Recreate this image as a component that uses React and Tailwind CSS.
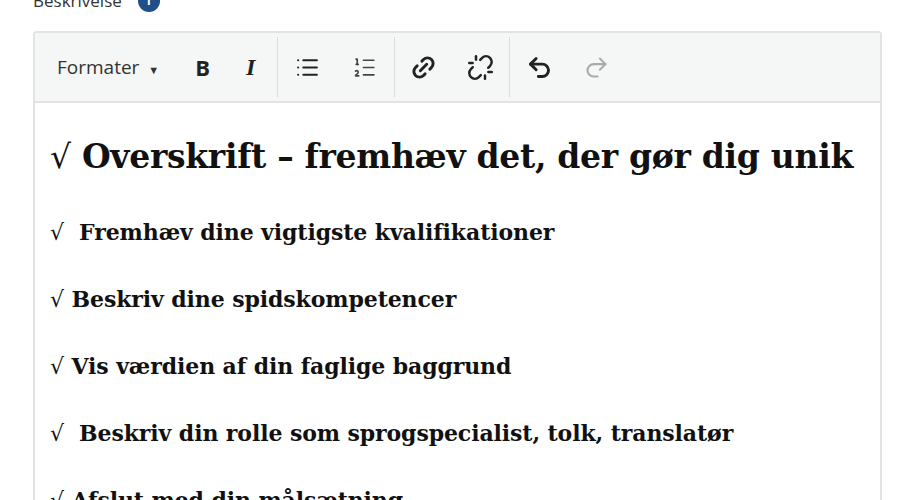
import React from 'react';
import { List, ListOrdered, Link2, Unlink, Undo2, Redo2 } from 'lucide-react';

const lines = [
    ' Fremhæv dine vigtigste kvalifikationer',
    'Beskriv dine spidskompetencer',
    'Vis værdien af din faglige baggrund',
    ' Beskriv din rolle som sprogspecialist, tolk, translatør',
    'Afslut med din målsætning',
];

const Sep = () => <div className="w-px self-stretch bg-[#dcdcdc]" />;

export default function App() {
    return (
        <div className="w-[900px] h-[500px] overflow-hidden bg-white relative" style={{ fontFamily: '"Open Sans", sans-serif' }}>
            <div className="absolute left-[33px] -top-[12px] flex items-center gap-4 text-[17px] text-[#333]">
                Beskrivelse
                <span className="w-[22px] h-[22px] rounded-full bg-[#1f4f8a] text-white text-[12px] font-bold flex items-center justify-center">i</span>
            </div>
            <div className="absolute left-[33px] top-[31px] w-[849px] h-[520px] border-2 border-[#e3e3e3] rounded-sm">
                <div className="h-[70px] bg-[#f5f6f6] border-b-2 border-[#e3e3e3] flex items-stretch py-1 text-[#222]">
                    <div className="flex items-center pl-[22px] pr-[22px] gap-[36px]">
                        <span className="text-[19px] text-[#333]">Formater <span className="text-[11px] ml-1">▼</span></span>
                        <span className="text-[22px] font-bold">B</span>
                        <span className="text-[24px] font-bold italic" style={{ fontFamily: '"Liberation Serif", serif' }}>I</span>
                    </div>
                    <Sep />
                    <div className="flex items-center px-[17px] gap-[32px]">
                        <List size={25} strokeWidth={2} />
                        <ListOrdered size={25} strokeWidth={1.6} className="text-[#444]" />
                    </div>
                    <Sep />
                    <div className="flex items-center px-[15px] gap-[30px]">
                        <Link2 size={27} strokeWidth={2.6} className="-rotate-45" />
                        <Unlink size={27} strokeWidth={2.2} />
                    </div>
                    <Sep />
                    <div className="flex items-center px-[16px] gap-[30px]">
                        <Undo2 size={27} strokeWidth={2.6} />
                        <Redo2 size={27} strokeWidth={1.8} className="text-[#aaa]" />
                    </div>
                </div>
                <div className="pl-[15px] pt-[30px] text-[#111]" style={{ fontFamily: '"DejaVu Serif", serif' }}>
                    <h1 className="text-[33px] font-bold leading-[48px] tracking-[-0.3px]">
                        <span className="font-normal">√</span> Overskrift – fremhæv det, der gør dig unik
                    </h1>
                    <div className="mt-[36px] flex flex-col gap-[36px]">
                        {lines.map((t, i) => (
                            <p key={i} className="text-[22px] font-bold leading-[31px] whitespace-pre tracking-[-0.1px]">
                                <span className="font-normal">√</span> {t}
                            </p>
                        ))}
                    </div>
                </div>
            </div>
        </div>
    );
}
